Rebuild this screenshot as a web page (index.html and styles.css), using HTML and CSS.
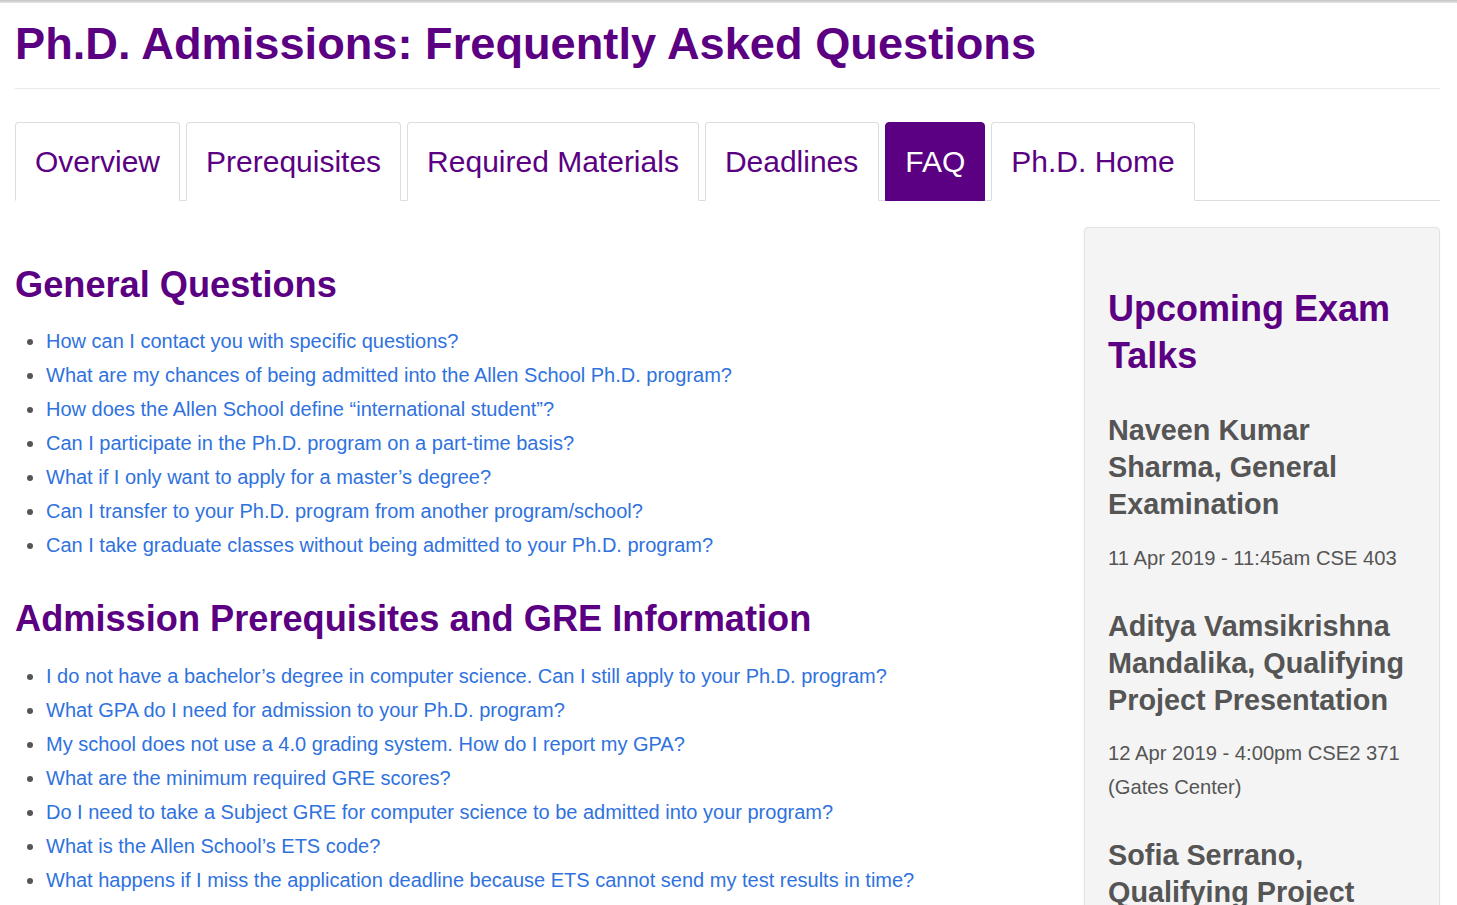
FILE: index.html
```html
<!DOCTYPE html>
<html lang="en">
<head>
<meta charset="utf-8">
<title>Ph.D. Admissions: Frequently Asked Questions</title>
<link rel="stylesheet" href="styles.css">
</head>
<body>
<div class="topbar"></div>
<div class="container">
  <h1 class="page-title">Ph.D. Admissions: Frequently Asked Questions</h1>
  <hr class="rule">
  <ul class="tabs">
    <li class="tab"><a href="#">Overview</a></li>
    <li class="tab"><a href="#">Prerequisites</a></li>
    <li class="tab"><a href="#">Required Materials</a></li>
    <li class="tab wide"><a href="#">Deadlines</a></li>
    <li class="tab active"><a href="#">FAQ</a></li>
    <li class="tab"><a href="#">Ph.D. Home</a></li>
  </ul>
  <div class="row">
    <main class="main">
      <h2 class="section-title">General Questions</h2>
      <ul class="faq">
        <li><a href="#">How can I contact you with specific questions?</a></li>
        <li><a href="#">What are my chances of being admitted into the Allen School Ph.D. program?</a></li>
        <li><a href="#">How does the Allen School define “international student”?</a></li>
        <li><a href="#">Can I participate in the Ph.D. program on a part-time basis?</a></li>
        <li><a href="#">What if I only want to apply for a master’s degree?</a></li>
        <li><a href="#">Can I transfer to your Ph.D. program from another program/school?</a></li>
        <li><a href="#">Can I take graduate classes without being admitted to your Ph.D. program?</a></li>
      </ul>
      <h2 class="section-title second">Admission Prerequisites and GRE Information</h2>
      <ul class="faq second">
        <li><a href="#">I do not have a bachelor’s degree in computer science. Can I still apply to your Ph.D. program?</a></li>
        <li><a href="#">What GPA do I need for admission to your Ph.D. program?</a></li>
        <li><a href="#">My school does not use a 4.0 grading system. How do I report my GPA?</a></li>
        <li><a href="#">What are the minimum required GRE scores?</a></li>
        <li><a href="#">Do I need to take a Subject GRE for computer science to be admitted into your program?</a></li>
        <li><a href="#">What is the Allen School’s ETS code?</a></li>
        <li><a href="#">What happens if I miss the application deadline because ETS cannot send my test results in time?</a></li>
        <li><a href="#">Do I need to submit TOEFL scores?</a></li>
      </ul>
    </main>
    <aside class="sidebar">
      <h2 class="side-title">Upcoming Exam Talks</h2>
      <div class="talk">
        <h3 class="talk-title">Naveen Kumar Sharma, General Examination</h3>
        <p class="talk-meta">11 Apr 2019 - 11:45am CSE 403</p>
      </div>
      <div class="talk">
        <h3 class="talk-title">Aditya Vamsikrishna Mandalika, Qualifying Project Presentation</h3>
        <p class="talk-meta">12 Apr 2019 - 4:00pm CSE2 371 (Gates Center)</p>
      </div>
      <div class="talk">
        <h3 class="talk-title">Sofia Serrano, Qualifying Project Presentation</h3>
        <p class="talk-meta">15 Apr 2019 - 10:30am CSE 303</p>
      </div>
    </aside>
  </div>
</div>
</body>
</html>
```
FILE: styles.css
```css
html, body {
  margin: 0;
  padding: 0;
  background: #ffffff;
}
body {
  font-family: "Liberation Sans", Arial, sans-serif;
  color: #555555;
}
.topbar {
  height: 3px;
  background: linear-gradient(#c4c4c4, #e6e6e6);
}
.container {
  padding: 0 17px 0 15px;
}
.page-title {
  margin: 15px 0 0 0;
  font-size: 45.2px;
  line-height: 51px;
  font-weight: bold;
  color: #5b0082;
}
.rule {
  margin: 19px 0 0 0;
  border: 0;
  border-top: 1px solid #e8e8ee;
  height: 0;
}
.tabs {
  list-style: none;
  margin: 33px 0 0 0;
  padding: 0;
  display: flex;
  gap: 6px;
  border-bottom: 1px solid #dddddd;
}
.tab {
  margin-bottom: -1px;
  border: 1px solid #dddddd;
  border-bottom-color: transparent;
  border-radius: 4px 4px 0 0;
  background: #ffffff;
}
.tab a {
  display: block;
  padding: 17px 19px 17px 19px;
  font-size: 30px;
  line-height: 43px;
  color: #5b0082;
  text-decoration: none;
}
.tab.wide a {
  padding-right: 20px;
}
.tab.active {
  background: #5b0082;
  border-color: #5b0082;
}
.tab.active a {
  color: #ffffff;
}
.row {
  display: grid;
  grid-template-columns: 1fr 356px;
  gap: 30px;
  margin-top: 26px;
  align-items: start;
}
.section-title {
  margin: 38px 0 0 0;
  font-size: 36.2px;
  line-height: 40px;
  font-weight: bold;
  color: #5b0082;
}
.section-title.second {
  margin-top: 37px;
}
.faq {
  margin: 19px 0 0 0;
  padding: 0 0 0 31px;
  font-size: 20px;
  line-height: 34px;
  color: #555555;
}
.faq.second {
  margin-top: 20px;
}
.faq a {
  color: #2f72de;
  text-decoration: none;
}
.sidebar {
  background: #f4f4f4;
  border: 1px solid #e2e2e2;
  border-radius: 4px;
  box-shadow: 0 1px 2px rgba(0, 0, 0, 0.05);
  padding: 57px 24px 30px 23px;
}
.side-title {
  margin: 0;
  font-size: 36px;
  line-height: 47px;
  font-weight: bold;
  color: #5b0082;
}
.talk {
  margin-top: 33px;
}
.talk + .talk {
  margin-top: 33px;
}
.talk-title {
  margin: 0;
  font-size: 28.8px;
  line-height: 37px;
  font-weight: bold;
  color: #555555;
}
.talk-meta {
  margin: 17.5px 0 0 0;
  font-size: 20.2px;
  line-height: 34px;
  color: #555555;
}
```
